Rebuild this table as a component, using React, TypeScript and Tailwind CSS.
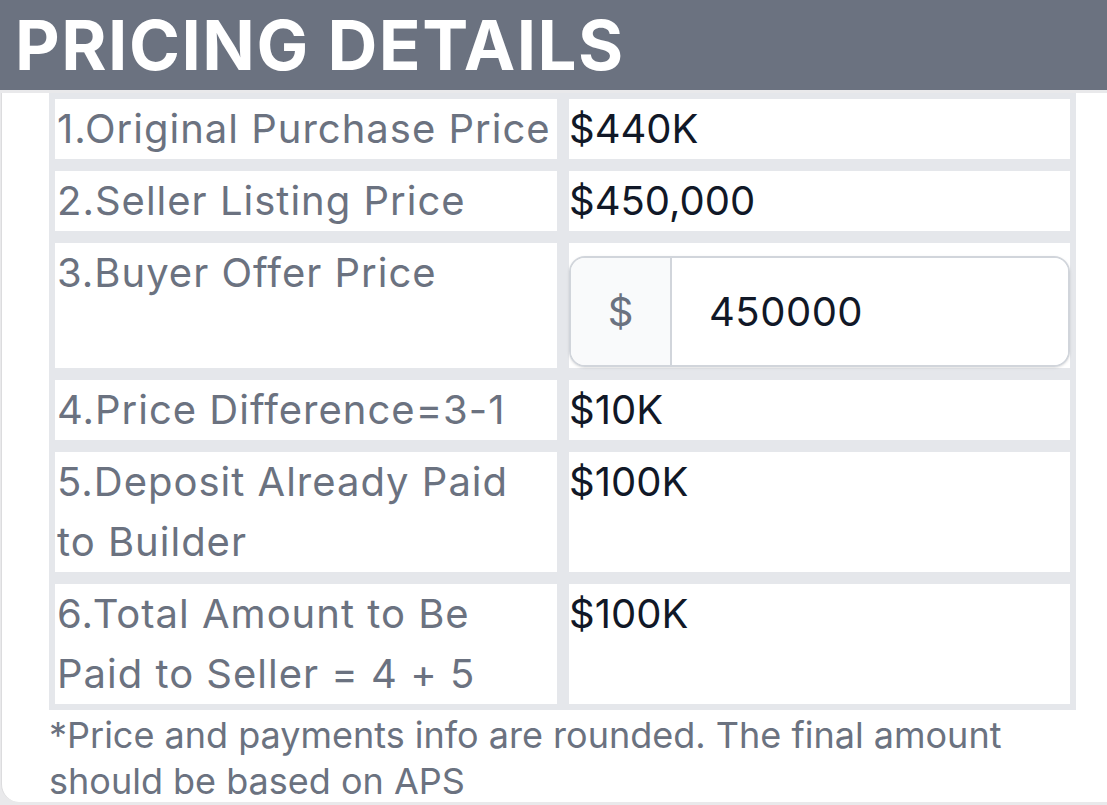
import React from "react";

const rows: { label: React.ReactNode; value: React.ReactNode }[] = [
  { label: "1.Original Purchase Price", value: "$440K" },
  { label: "2.Seller Listing Price", value: "$450,000" },
  { label: "3.Buyer Offer Price", value: "__input__" },
  { label: "4.Price Difference=3-1", value: "$10K" },
  { label: "5.Deposit Already Paid to Builder", value: "$100K" },
  { label: "6.Total Amount to Be Paid to Seller = 4 + 5", value: "$100K" },
];

export default function App() {
  return (
    <div
      className="w-[1107px] h-[805px] overflow-hidden bg-[#e9e9eb]"
      style={{ fontFamily: "Inter, 'Noto Sans', sans-serif" }}
    >
      <div className="h-[90px] bg-[#6b7280] pl-[15px] flex items-start">
        <h1 className="text-white font-bold text-[69px] leading-[90px] tracking-[1.5px]">
          PRICING DETAILS
        </h1>
      </div>
      <div className="mt-[3px] ml-[1px] w-[1140px] h-[709px] bg-white rounded-bl-[18px] border-l border-[#dcdcde] pl-[47px]">
        <table className="w-[1027px] border-separate border-spacing-0 table-fixed">
          <colgroup>
            <col className="w-[514px]" />
            <col className="w-[513px]" />
          </colgroup>
          <tbody>
            {rows.map((r, i) => (
              <tr key={i}>
                <td className="align-top border-[6px] border-[#e5e7eb] pl-[2px] pr-0 text-[40px] leading-[60px] tracking-[1px] text-[#6b7280]">
                  {r.label}
                </td>
                <td className="align-top border-[6px] border-[#e5e7eb] pl-0 pr-0 text-[40px] leading-[60px] text-[#111827]">
                  {r.value === "__input__" ? (
                    <div className="mt-[13px] mb-[1px] flex h-[111px] rounded-[16px] border-2 border-[#d1d5db] overflow-hidden shadow-sm">
                      <div className="w-[101px] bg-[#f9fafb] border-r-2 border-[#d1d5db] flex items-center justify-center text-[#6b7280] text-[40px]">
                        $
                      </div>
                      <div className="flex-1 bg-white flex items-center pl-[37px] text-[#111827] text-[40px] tracking-[0.5px]">
                        450000
                      </div>
                    </div>
                  ) : (
                    r.value
                  )}
                </td>
              </tr>
            ))}
          </tbody>
        </table>
        <p className="pl-0 pr-[90px] text-[36px] leading-[46px] text-[#6b7280] mt-[2px]">
          *Price and payments info are rounded. The final amount should be based on APS
        </p>
      </div>
    </div>
  );
}
